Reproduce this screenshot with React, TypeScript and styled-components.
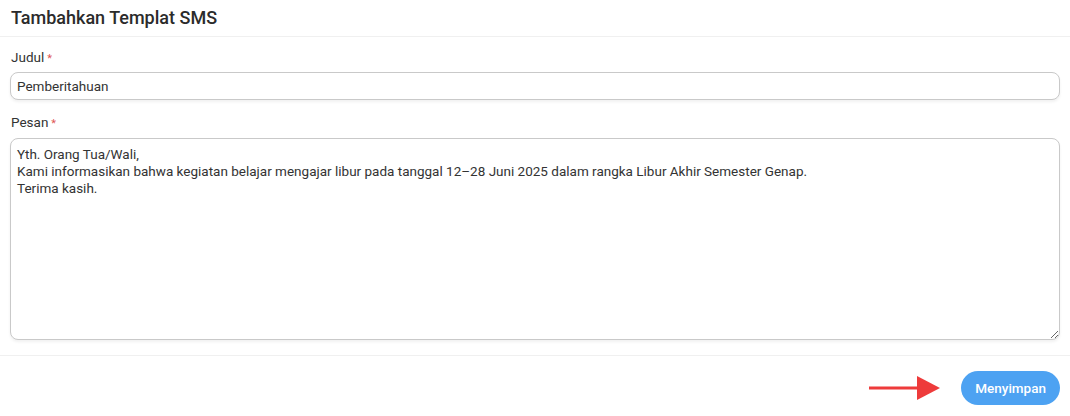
import styled, { createGlobalStyle } from 'styled-components';
import { useState } from 'react';

const GlobalStyle = createGlobalStyle`
  html, body {
    margin: 0;
    padding: 0;
    background: #fff;
    font-family: Roboto, "Liberation Sans", sans-serif;
    color: #333;
  }
`

const defaultMessage = `Yth. Orang Tua/Wali,
Kami informasikan bahwa kegiatan belajar mengajar libur pada tanggal 12–28 Juni 2025 dalam rangka Libur Akhir Semester Genap.
Terima kasih.`

export default function App() {
  const [title, setTitle] = useState<string>('Pemberitahuan')
  const [message, setMessage] = useState<string>(defaultMessage)

  return (
    <>
      <GlobalStyle />
      <Modal>
        <Header>
          <Title>Tambahkan Templat SMS</Title>
        </Header>
        <Body>
          <Field>
            <Label>Judul<Required>*</Required></Label>
            <Input value={title} onChange={e => setTitle(e.target.value)} />
          </Field>
          <Field>
            <Label>Pesan<Required>*</Required></Label>
            <TextArea value={message} onChange={e => setMessage(e.target.value)} />
          </Field>
        </Body>
        <Footer>
          <Arrow width="72" height="30" viewBox="0 0 72 30">
            <line x1="0" y1="15" x2="50" y2="15" stroke="#ee3b3b" strokeWidth="3" />
            <polygon points="48,3 71,15 48,27" fill="#ee3b3b" />
          </Arrow>
          <SaveButton>Menyimpan</SaveButton>
        </Footer>
      </Modal>
    </>
  )
}

const Modal = styled.div`
  width: 1070px;
  height: 416px;
  display: flex;
  flex-direction: column;
`

const Header = styled.div`
  height: 37px;
  box-sizing: border-box;
  padding: 0 11px 2px;
  display: flex;
  align-items: center;
  border-bottom: 1px solid #f0f0f0;
`

const Title = styled.h2`
  margin: 0;
  font-size: 18px;
  font-weight: 500;
  color: #2b2b2b;
`

const Body = styled.div`
  padding: 12px 10px 15px 10px;
  display: flex;
  flex-direction: column;
  gap: 14px;
  border-bottom: 1px solid #f0f0f0;
`

const Field = styled.div`
  display: flex;
  flex-direction: column;
  gap: 5px;
`

const Label = styled.label`
  font-size: 13.5px;
  color: #333;
  padding-left: 1px;
  line-height: 17px;
`

const Required = styled.span`
  color: #e05555;
  font-size: 11px;
  margin-left: 3px;
`

const Input = styled.input`
  height: 28px;
  box-sizing: border-box;
  border: 1px solid #c9c9c9;
  border-radius: 8px;
  padding: 0 6px;
  font-family: Roboto, "Liberation Sans", sans-serif;
  font-size: 13.5px;
  color: #333;
  box-shadow: 0 2px 3px rgba(0, 0, 0, 0.06);
  outline: none;
`

const TextArea = styled.textarea`
  height: 202px;
  margin-top: 1px;
  box-sizing: border-box;
  border: 1px solid #c9c9c9;
  border-radius: 8px;
  padding: 7px 6px;
  font-family: Roboto, "Liberation Sans", sans-serif;
  font-size: 13.5px;
  line-height: 17px;
  color: #333;
  box-shadow: 0 2px 3px rgba(0, 0, 0, 0.06);
  outline: none;
  resize: vertical;
`

const Footer = styled.div`
  flex: 1;
  display: flex;
  align-items: center;
  justify-content: flex-end;
  padding: 4px 10px 0 0;
  gap: 20px;
`

const Arrow = styled.svg`
  display: block;
`

const SaveButton = styled.button`
  height: 34px;
  padding: 0 14px;
  border: none;
  border-radius: 17px;
  background: #4da2f2;
  color: #fff;
  font-family: Roboto, "Liberation Sans", sans-serif;
  font-size: 13.5px;
  font-weight: 500;
  cursor: pointer;
`
